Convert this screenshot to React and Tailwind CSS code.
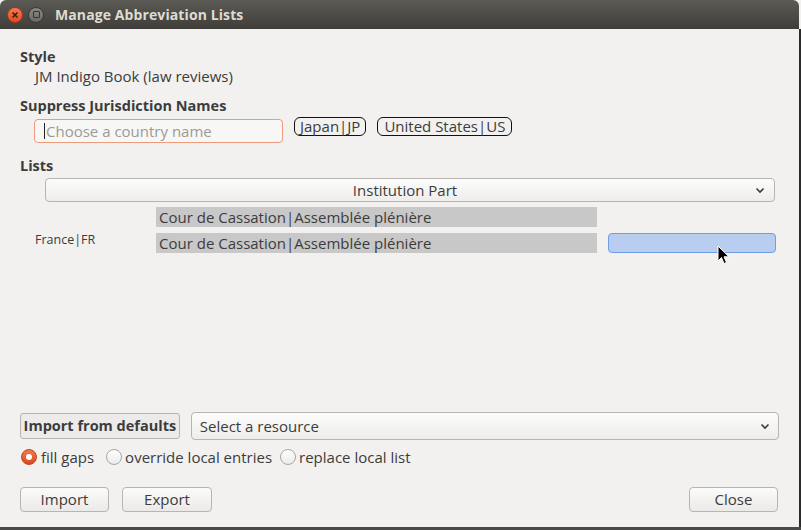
import React from "react";

const font = { fontFamily: '"Open Sans", "Noto Sans", "DejaVu Sans", sans-serif' };

function Chevron() {
  return (
    <svg width="10" height="7" viewBox="0 0 10 7" className="shrink-0">
      <path d="M1.5 1.5 L5 5 L8.5 1.5" fill="none" stroke="#3c3c3c" strokeWidth="1.6" />
    </svg>
  );
}

function Radio({ checked }) {
  return checked ? (
    <span className="w-[16px] h-[16px] rounded-full bg-gradient-to-b from-[#f07a4f] to-[#d9491d] border border-[#c2441c] flex items-center justify-center shrink-0">
      <span className="block w-[6px] h-[6px] rounded-full bg-white" />
    </span>
  ) : (
    <span className="block w-[16px] h-[16px] rounded-full bg-gradient-to-b from-white to-[#ebebeb] border border-[#a8a6a2] shrink-0" />
  );
}

function Button({ children, className = "" }) {
  return (
    <div
      className={
        "h-[25px] rounded-[4px] border border-[#b8b5b0] bg-gradient-to-b from-[#fbfbfa] to-[#ebeae8] flex items-center justify-center text-[15px] text-[#3c3c3c] " +
        className
      }
    >
      {children}
    </div>
  );
}

export default function App() {
  return (
    <div className="w-[801px] h-[530px] bg-[#f2f1f0] relative overflow-hidden flex flex-col" style={font}>
      {/* title bar */}
      <div className="h-[29px] shrink-0 rounded-t-[6px] bg-gradient-to-b from-[#5b5a54] to-[#3f3e3a] flex items-center pl-[7px] mr-[2px]">
        <div className="w-[16px] h-[16px] rounded-full bg-gradient-to-b from-[#f47a52] to-[#df4a1f] border border-[#a8391a] flex items-center justify-center">
          <svg width="8" height="8" viewBox="0 0 8 8">
            <path d="M1.5 1.5 L6.5 6.5 M6.5 1.5 L1.5 6.5" stroke="#3b1a10" strokeWidth="1.5" />
          </svg>
        </div>
        <div className="ml-[5px] w-[16px] h-[16px] rounded-full bg-gradient-to-b from-[#8a8883] to-[#6b6a65] border border-[#3a3935] flex items-center justify-center">
          <span className="block w-[7px] h-[7px] border border-[#333] rounded-[1px]" />
        </div>
        <span className="ml-[11px] text-[14px] font-bold text-[#dfdbd2] tracking-[0.1px]">Manage Abbreviation Lists</span>
      </div>

      {/* body */}
      <div className="flex-1 flex flex-col px-[20px] text-[#3c3c3c] border-r-[2px] border-[#2b2b2b] relative">
        <div className="mt-[19px] h-[18px] leading-[18px] text-[14.5px] font-bold">Style</div>
        <div className="mt-[1px] h-[18px] leading-[18px] text-[15px] pl-[15px]">JM Indigo Book (law reviews)</div>
        <div className="mt-[12px] h-[18px] leading-[18px] text-[14.5px] font-bold">Suppress Jurisdiction Names</div>

        <div className="mt-[2px] flex items-start">
          <div className="ml-[14px] mt-[2px] w-[249px] h-[24px] rounded-[4px] border border-[#ef9a7c] bg-[#f7f7f6] flex items-center pl-[9px] text-[15px] text-[#9c9a96]">
            <span className="block w-[1px] h-[16px] bg-[#222] mr-[1px]" />
            Choose a country name
          </div>
          <div className="ml-[11px] h-[19px] px-[5px] rounded-[6px] border border-[#111] flex items-center text-[15px] text-[#3c3c3c]">
            Japan|JP
          </div>
          <div className="ml-[11px] h-[19px] px-[6px] rounded-[6px] border border-[#111] flex items-center text-[15px] text-[#3c3c3c]">
            United States|US
          </div>
        </div>

        <div className="mt-[14px] h-[18px] leading-[18px] text-[14.5px] font-bold">Lists</div>
        <div className="mt-[3px] ml-[25px] w-[730px] h-[24px] rounded-[4px] border border-[#b8b5b0] bg-gradient-to-b from-[#fcfcfc] to-[#eeedeb] flex items-center px-[9px]">
          <span className="flex-1 text-center text-[15px]">Institution Part</span>
          <Chevron />
        </div>

        <div className="mt-[5px] flex items-center h-[20px]">
          <div className="w-[136px]" />
          <div className="w-[441px] h-[20px] bg-[#c8c8c8] pl-[3px] flex items-center text-[15px]">
            Cour de Cassation|Assemblée plénière
          </div>
        </div>
        <div className="mt-[6px] flex items-center h-[20px]">
          <div className="w-[136px] h-[20px] pl-[15px] text-[12.5px] leading-[14px]">France|FR</div>
          <div className="w-[441px] h-[20px] bg-[#c8c8c8] pl-[3px] flex items-center text-[15px]">
            Cour de Cassation|Assemblée plénière
          </div>
          <div className="ml-[11px] w-[168px] h-[20px] rounded-[4px] border border-[#6f9de6] bg-[#b8cdf0]" />
        </div>

        <div className="flex-1" />

        <div className="flex items-center">
          <div className="w-[160px] h-[26px] rounded-[3px] border border-[#b8b5b0] bg-[#ecebe9] flex items-center justify-center text-[14.5px] font-bold">
            Import from defaults
          </div>
          <div className="ml-[11px] w-[589px] h-[28px] rounded-[4px] border border-[#b8b5b0] bg-gradient-to-b from-[#fcfcfc] to-[#eeedeb] flex items-center pl-[8px] pr-[8px]">
            <span className="flex-1 text-[15px]">Select a resource</span>
            <Chevron />
          </div>
        </div>

        <div className="mt-[9px] h-[16px] flex items-center text-[15px]">
          <span className="ml-[1px]"><Radio checked /></span>
          <span className="ml-[4px]">fill gaps</span>
          <span className="ml-[12px]"><Radio /></span>
          <span className="ml-[3px]">override local entries</span>
          <span className="ml-[8px]"><Radio /></span>
          <span className="ml-[3px]">replace local list</span>
        </div>

        <div className="mt-[22px] mb-[15px] flex items-center">
          <Button className="w-[89px]">Import</Button>
          <Button className="ml-[13px] w-[90px]">Export</Button>
          <div className="flex-1" />
          <Button className="w-[89px] mr-[1px]">Close</Button>
        </div>

        {/* mouse cursor */}
        <svg className="absolute left-[717px] top-[216px]" width="14" height="21" viewBox="0 0 14 21">
          <path d="M1 1 L1 16 L4.5 12.5 L7 18.5 L9.5 17.5 L7 11.8 L12 11.8 Z" fill="#000" stroke="#fff" strokeWidth="1" strokeLinejoin="round" />
        </svg>
      </div>
      <div className="h-[3px] shrink-0 bg-[#4a4a48]" />
    </div>
  );
}
